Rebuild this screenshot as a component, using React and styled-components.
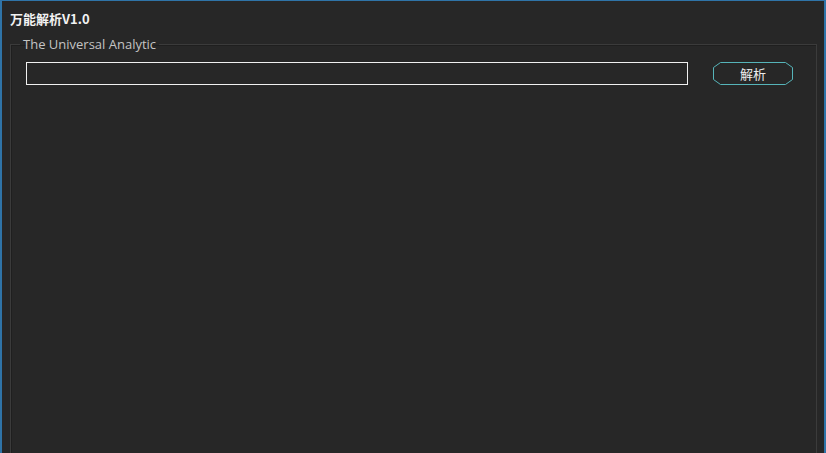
import React from "react";
import styled, { createGlobalStyle } from "styled-components";

const Global = createGlobalStyle`
  html, body { margin: 0; padding: 0; background: #272727; overflow: hidden; }
  body { font-family: "Segoe UI", "Open Sans", "Noto Sans CJK SC", sans-serif; }
`;

const Window = styled.div`
  box-sizing: border-box;
  width: 826px;
  height: 470px;
  background: #272727;
  border: 1px solid #2f74a8;
  border-left-width: 2px;
  border-right-width: 2px;
  display: flex;
  flex-direction: column;
`;

const Title = styled.div`
  font-family: "Noto Sans CJK SC", "Noto Sans", sans-serif;
  font-weight: 700;
  font-size: 13px;
  color: #f2f2f2;
  padding: 9px 0 0 8px;
  height: 22px;
  line-height: 18px;
`;

const Group = styled.fieldset`
  margin: 3px 7px 0 8px;
  padding: 9px 23px 0 15px;
  border: 1px solid #3b3b3b;
  box-shadow: inset 1px 1px 0 #1f1f1f;
  min-width: 0;
  flex: 1;
  display: flex;
  flex-direction: column;
`;

const Legend = styled.legend`
  font-family: "Open Sans", "Noto Sans", sans-serif;
  font-size: 13px;
  color: #c4c4c4;
  padding: 0 3px;
  margin-left: -6px;
  line-height: 18px;
`;

const Row = styled.div`
  display: flex;
  align-items: flex-start;
  gap: 25px;
`;

const Input = styled.input`
  box-sizing: border-box;
  flex: 1;
  height: 23px;
  background: #272727;
  border: 1.5px solid #f0f0f0;
  color: #fff;
  outline: none;
  padding: 0 4px;
  font-size: 13px;
`;

const Button = styled.button`
  position: relative;
  width: 80px;
  height: 23px;
  background: transparent;
  border: none;
  padding: 0;
  color: #ececec;
  font-family: "Noto Sans CJK SC", sans-serif;
  font-size: 13px;
  line-height: 23px;
  cursor: pointer;
  svg { position: absolute; inset: 0; }
  span { position: relative; }
`;

export default function App() {
  return (
    <>
      <Global />
      <Window>
        <Title>万能解析V1.0</Title>
        <Group>
          <Legend>The Universal Analytic</Legend>
          <Row>
            <Input type="text" />
            <Button>
              <svg width="80" height="23" viewBox="0 0 80 23">
                <polygon
                  points="7.5,0.5 72.5,0.5 79.5,5.5 79.5,17.5 72.5,22.5 7.5,22.5 0.5,17.5 0.5,5.5"
                  fill="none"
                  stroke="#56b4b9"
                  strokeWidth="1"
                />
              </svg>
              <span>解析</span>
            </Button>
          </Row>
        </Group>
      </Window>
    </>
  );
}
